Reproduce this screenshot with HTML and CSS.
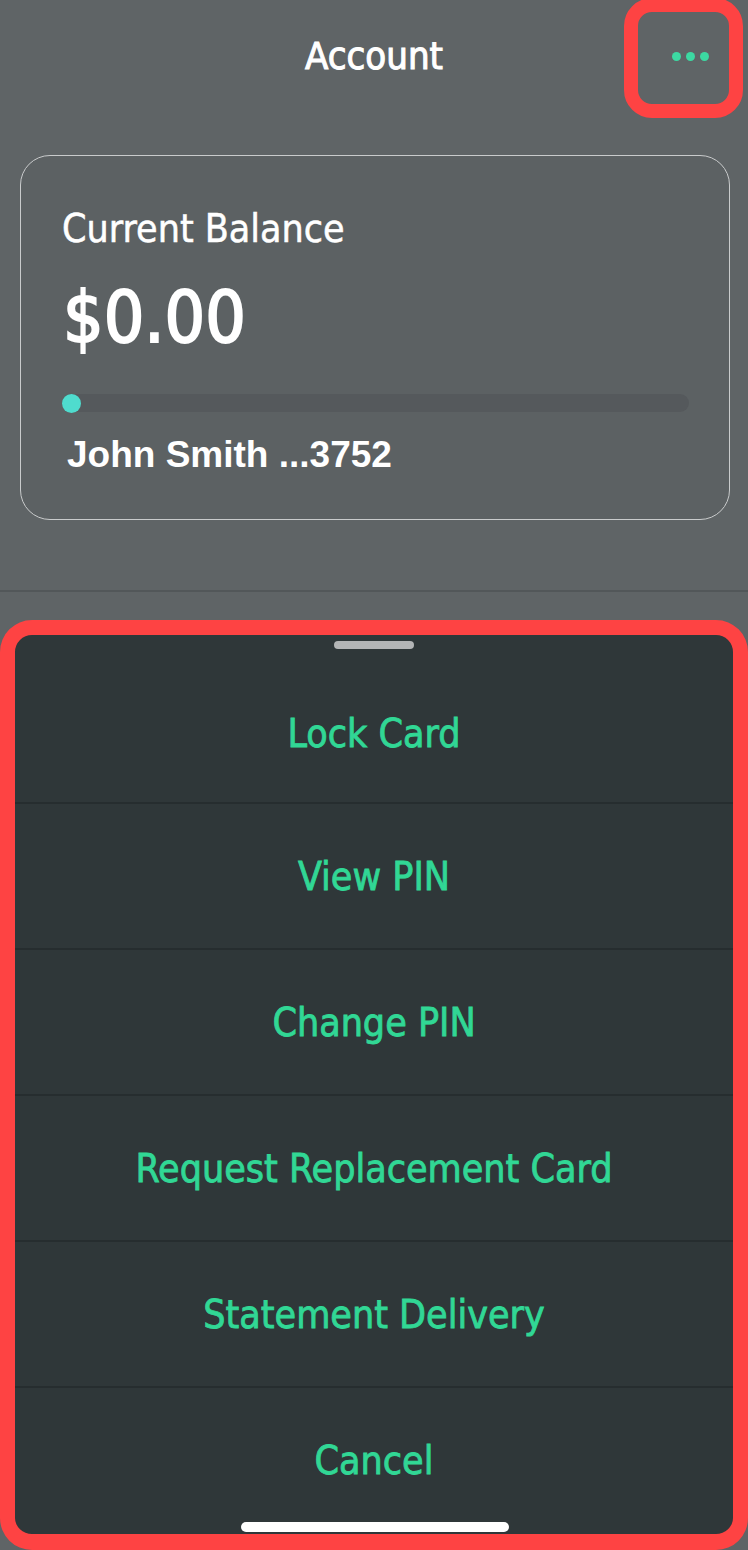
FILE: index.html
```html
<!DOCTYPE html>
<html>
<head>
<meta charset="utf-8">
<link rel="stylesheet" href="styles.css">
</head>
<body>
<div class="screen">
  <header class="topbar">
    <h1 class="title">Account</h1>
    <div class="more">
      <span class="dot"></span><span class="dot"></span><span class="dot"></span>
      <div class="mark-small"></div>
    </div>
  </header>
  <section class="card">
    <div class="card-label">Current Balance</div>
    <div class="card-amount">$0.00</div>
    <div class="track"><span class="knob"></span></div>
    <div class="card-owner">John Smith ...3752</div>
  </section>
  <div class="divider"></div>
  <section class="sheet">
    <div class="handle"></div>
    <ul class="actions">
      <li class="action first">Lock Card</li>
      <li class="action">View PIN</li>
      <li class="action">Change PIN</li>
      <li class="action">Request Replacement Card</li>
      <li class="action">Statement Delivery</li>
      <li class="action">Cancel</li>
    </ul>
    <div class="home"></div>
  </section>
</div>
</body>
</html>
```
FILE: styles.css
```css
html, body {
  margin: 0;
  padding: 0;
}
body {
  background: #5f6466;
  width: 748px;
  height: 1550px;
  overflow: hidden;
  font-family: "DejaVu Sans Condensed", "DejaVu Sans", sans-serif;
}
.screen {
  display: flex;
  flex-direction: column;
  height: 1550px;
}
.topbar {
  height: 112px;
  display: flex;
  align-items: center;
  justify-content: center;
  position: relative;
}
.title {
  margin: 0;
  color: #ffffff;
  font-size: 38px;
  font-weight: 400;
  -webkit-text-stroke: 1px #ffffff;
}
.more {
  position: absolute;
  left: 643px;
  top: 14px;
  width: 94px;
  height: 90px;
  display: flex;
  align-items: center;
  justify-content: center;
  gap: 5px;
  padding-bottom: 6px;
  box-sizing: border-box;
}
.dot {
  width: 9px;
  height: 9px;
  border-radius: 50%;
  background: #3cd9a2;
}
.mark-small {
  position: absolute;
  left: -19px;
  top: -16px;
  right: -6px;
  bottom: -14px;
  border: 14px solid #fe4343;
  border-radius: 28px;
  box-sizing: border-box;
}
.card {
  margin: 43px 18px 0 20px;
  height: 365px;
  box-sizing: border-box;
  border: 1.5px solid #c9cbcc;
  border-radius: 30px;
  padding: 53px 40px 0 41px;
  background: #5c6163;
}
.card-label {
  color: #ffffff;
  font-size: 39px;
  line-height: 1;
  -webkit-text-stroke: 0.5px #ffffff;
}
.card-amount {
  color: #ffffff;
  font-size: 71px;
  font-weight: 400;
  line-height: 1;
  margin-top: 34px;
  margin-left: 1px;
  -webkit-text-stroke: 2px #ffffff;
}
.track {
  margin-top: 41px;
  height: 18px;
  border-radius: 9px;
  background: #55595c;
  position: relative;
}
.knob {
  position: absolute;
  left: 0;
  top: 0;
  width: 19px;
  height: 19px;
  border-radius: 50%;
  background: #4fdcce;
}
.card-owner {
  margin-top: 24px;
  margin-left: 5px;
  color: #ffffff;
  font-family: "Liberation Sans", Arial, sans-serif;
  font-weight: 700;
  font-size: 37px;
  line-height: 1;
}
.divider {
  margin-top: 70px;
  height: 2px;
  background: #525759;
}
.sheet {
  margin-top: 28px;
  flex: 1;
  border: 15px solid #fe4343;
  border-bottom-width: 16px;
  border-radius: 32px;
  background: #2f3739;
  display: flex;
  flex-direction: column;
  align-items: stretch;
  position: relative;
  overflow: hidden;
}
.handle {
  align-self: center;
  width: 80px;
  height: 8px;
  border-radius: 4px;
  background: #b3b5b6;
  margin-top: 6px;
}
.actions {
  list-style: none;
  margin: 0;
  padding: 0;
  flex: 1;
  display: flex;
  flex-direction: column;
}
.action {
  box-sizing: border-box;
  height: 146px;
  display: flex;
  align-items: center;
  justify-content: center;
  color: #31d795;
  font-size: 39px;
  font-weight: 400;
  -webkit-text-stroke: 0.8px #31d795;
  border-top: 2px solid #262d2f;
}
.action.first {
  border-top: none;
  height: 153px;
  padding-top: 16px;
}
.home {
  position: absolute;
  left: 226px;
  bottom: 2px;
  width: 268px;
  height: 10px;
  border-radius: 5px;
  background: #ffffff;
}
```
